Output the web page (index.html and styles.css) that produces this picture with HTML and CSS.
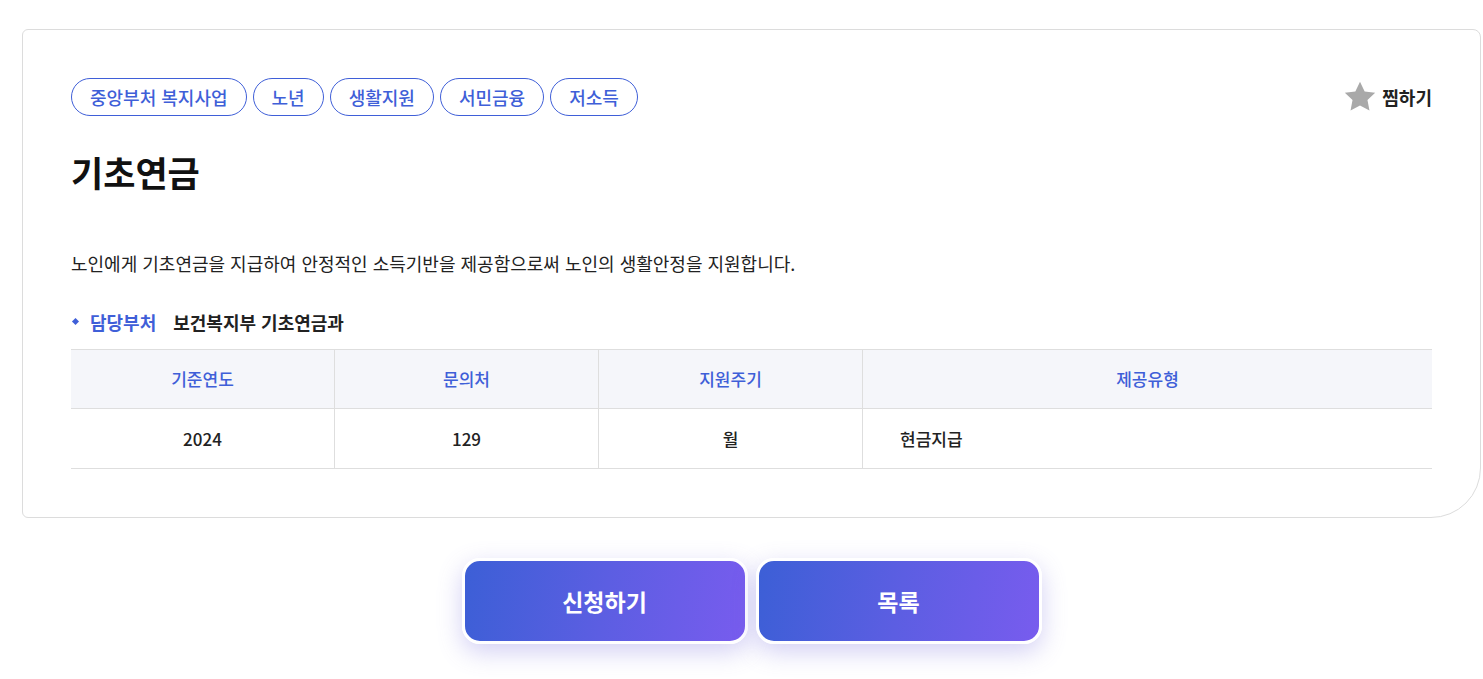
FILE: index.html
```html
<!DOCTYPE html>
<html lang="ko">
<head>
  <meta charset="UTF-8">
  <meta name="viewport" content="width=device-width, initial-scale=1.0">
  <title>기초연금</title>
  <link rel="stylesheet" href="styles.css">
</head>
<body>

<div class="page">
  <div class="card">
    <div class="card-top">
      <ul class="tags">
        <li class="tag">중앙부처 복지사업</li>
        <li class="tag">노년</li>
        <li class="tag">생활지원</li>
        <li class="tag">서민금융</li>
        <li class="tag">저소득</li>
      </ul>
      <button class="fav">
        <svg width="32" height="32" viewBox="0 0 24 24">
          <path d="M12 0.6l3.5 7.2 7.9 1-5.8 5.4 1.5 7.9L12 18.3l-7.1 3.8 1.5-7.9L0.6 8.8l7.9-1z" fill="#a9a9a9"/>
        </svg>
        <span>찜하기</span>
      </button>
    </div>

    <h1 class="title">기초연금</h1>

    <p class="desc">노인에게 기초연금을 지급하여 안정적인 소득기반을 제공함으로써 노인의 생활안정을 지원합니다.</p>

    <div class="dept">
      <span class="dept-label">담당부처</span>
      <span class="dept-value">보건복지부 기초연금과</span>
    </div>

    <table class="info-table">
      <thead>
        <tr>
          <th>기준연도</th>
          <th>문의처</th>
          <th>지원주기</th>
          <th class="wide">제공유형</th>
        </tr>
      </thead>
      <tbody>
        <tr>
          <td>2024</td>
          <td>129</td>
          <td>월</td>
          <td class="left">현금지급</td>
        </tr>
      </tbody>
    </table>
  </div>

  <div class="actions">
    <button class="btn">신청하기</button>
    <button class="btn">목록</button>
  </div>
</div>

</body>
</html>
```

FILE: styles.css
```css
html, body {
  overflow-x: hidden;
}

body {
  margin: 0;
  background-color: #fff;
  font-family: "Noto Sans CJK KR", "Noto Sans", sans-serif;
  color: #222;
}

.page {
  width: 1459px;
  margin-left: 22px;
  padding: 29px 0 60px;
}

.card {
  border: 1px solid #dcdcdc;
  border-radius: 6px 8px 50px 6px;
  padding: 48px;
}

.card-top {
  display: flex;
  justify-content: space-between;
  align-items: center;
}

.tags {
  list-style: none;
  margin: 0;
  padding: 0;
  display: flex;
  gap: 6px;
}

.tag {
  height: 36px;
  line-height: 36px;
  padding: 0 18px;
  border: 1px solid #3f5fd8;
  border-radius: 19px;
  color: #3f5fd8;
  font-size: 18px;
  font-weight: 500;
}

.fav {
  display: flex;
  align-items: center;
  gap: 6px;
  border: none;
  background: none;
  padding: 0;
  font-family: inherit;
  font-size: 18px;
  font-weight: 700;
  color: #222;
  cursor: pointer;
}

.title {
  margin: 33px 0 0;
  font-size: 35px;
  font-weight: 700;
  color: #111;
  line-height: 1.3;
}

.desc {
  margin: 55px 0 0;
  font-size: 18px;
  line-height: 1.5;
  color: #222;
}

.dept {
  margin-top: 32px;
  display: flex;
  align-items: center;
  font-size: 18px;
  line-height: 1.5;
}

.dept-label {
  position: relative;
  padding-left: 19px;
  color: #3f5fd8;
  font-weight: 700;
  margin-right: 17px;
}

.dept-label::before {
  content: "";
  position: absolute;
  left: 2px;
  top: 50%;
  width: 5px;
  height: 5px;
  margin-top: -3px;
  background-color: #3f5fd8;
  transform: rotate(45deg);
}

.dept-value {
  font-weight: 600;
  color: #222;
}

.info-table {
  width: 100%;
  margin-top: 13px;
  border-collapse: collapse;
  font-size: 17px;
}

.info-table th,
.info-table td {
  height: 58px;
  border-top: 1px solid #dedede;
  border-bottom: 1px solid #dedede;
  border-left: 1px solid #dedede;
  text-align: center;
  padding: 0;
}

.info-table td {
  height: 59px;
}

.info-table th:first-child,
.info-table td:first-child {
  border-left: none;
}

.info-table th {
  width: 263px;
  background-color: #f5f6fa;
  color: #3f5fd8;
  font-weight: 500;
}

.info-table th.wide {
  width: auto;
}

.info-table td {
  color: #222;
  font-weight: 500;
}

.info-table td.left {
  text-align: left;
  padding-left: 37px;
}

.actions {
  display: flex;
  justify-content: center;
  gap: 8px;
  margin-top: 40px;
}

.btn {
  width: 286px;
  height: 86px;
  border: 3px solid #fff;
  border-radius: 18px;
  background: linear-gradient(100deg, #3c5fd6 0%, #5c5ee2 50%, #785cee 100%);
  color: #fff;
  font-family: inherit;
  font-size: 23px;
  font-weight: 700;
  box-shadow: 0 8px 24px rgba(108, 98, 220, 0.3);
  cursor: pointer;
}
```
